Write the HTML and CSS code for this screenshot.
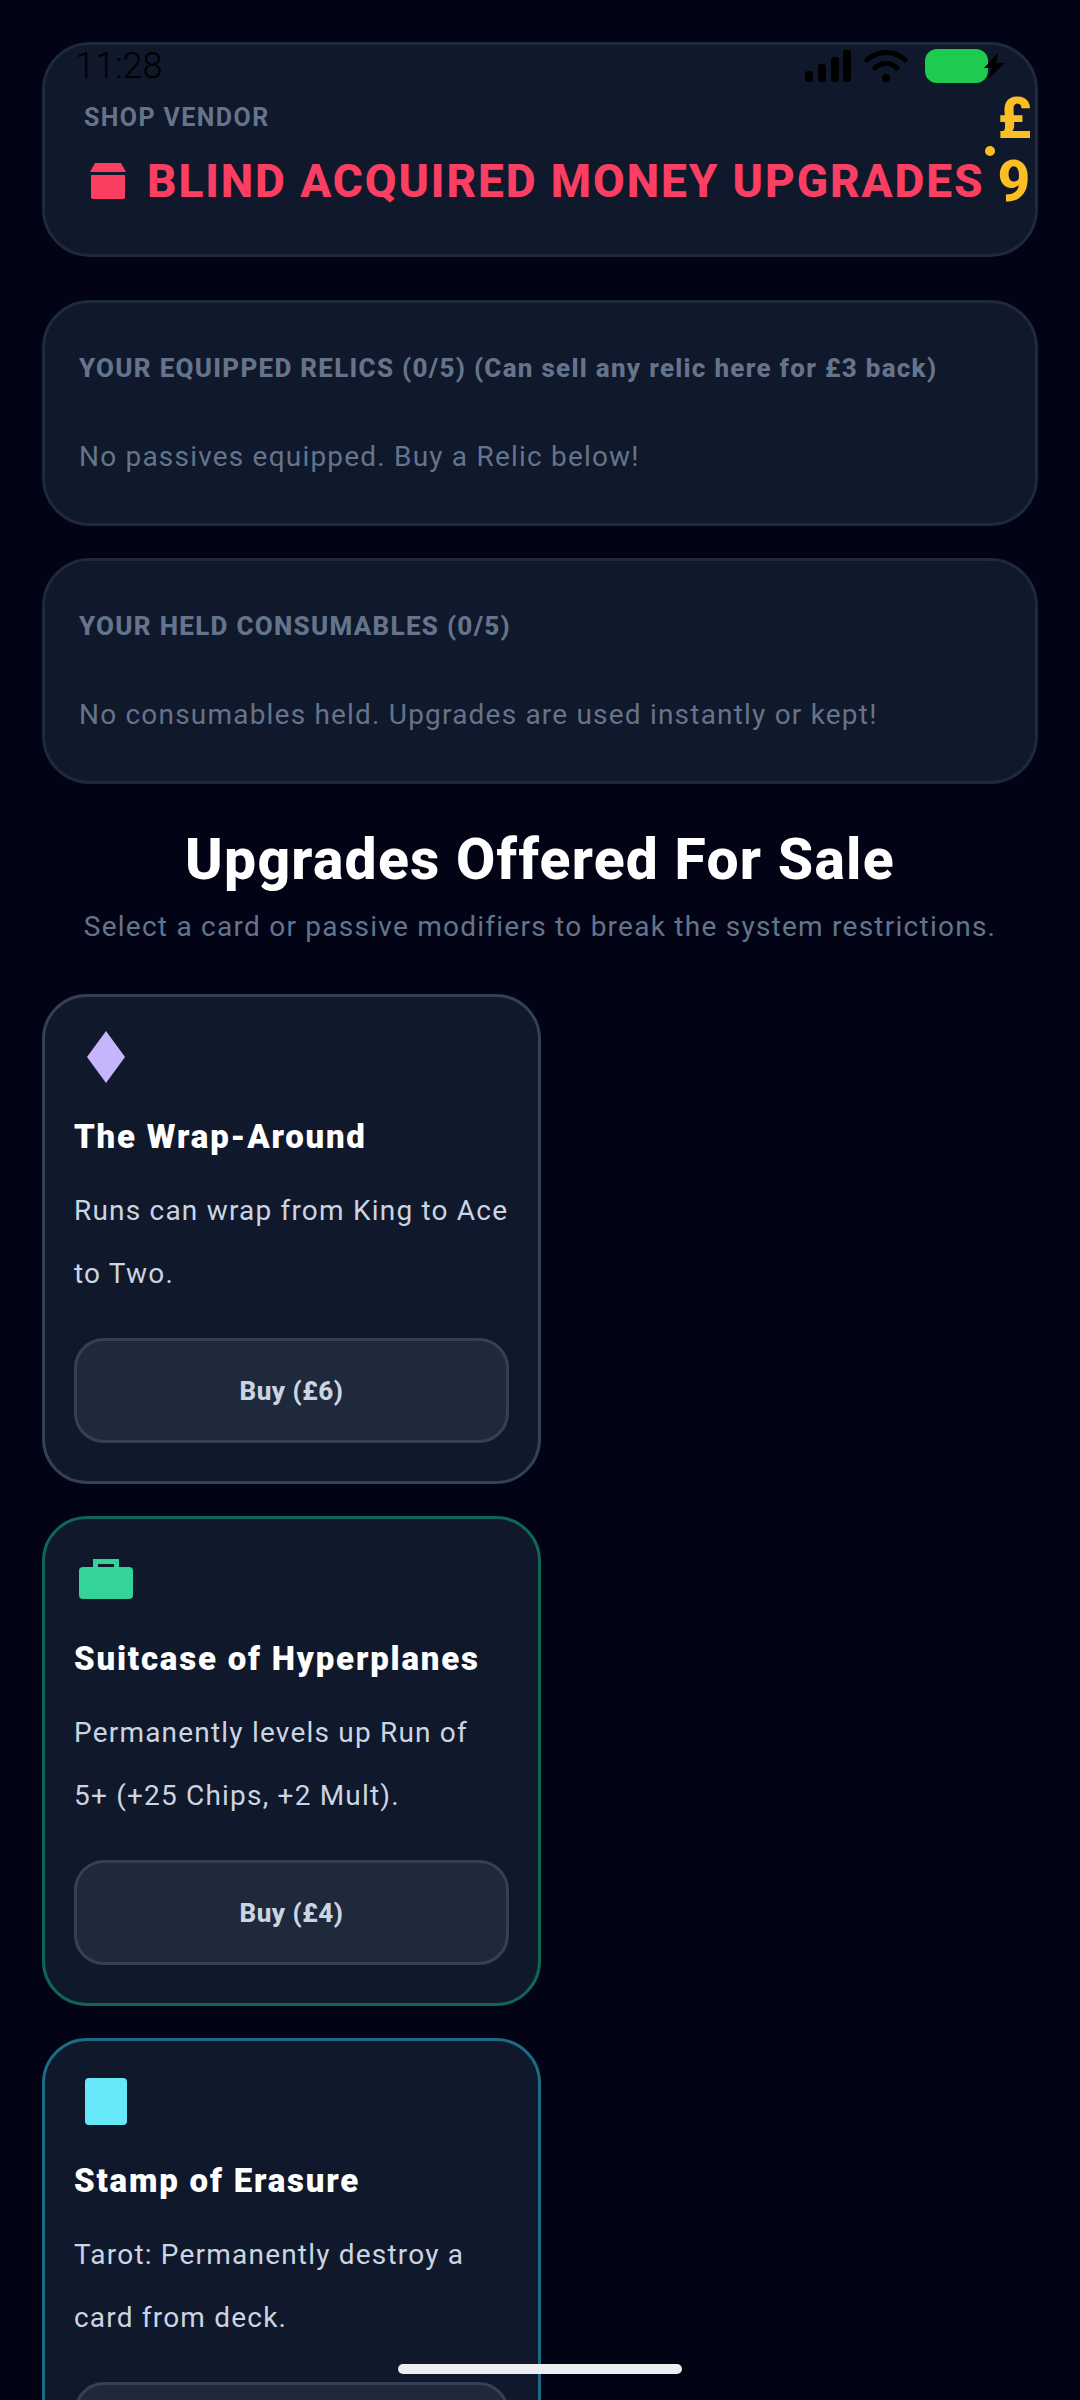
FILE: index.html
```html
<!DOCTYPE html>
<html lang="en">
<head>
  <meta charset="UTF-8">
  <meta name="viewport" content="width=device-width, initial-scale=1.0">
  <title>Shop Vendor</title>
  <link rel="stylesheet" href="styles.css">
</head>
<body>
  <div class="status-bar">
    <span class="status-time">11:28</span>
    <div class="status-icons">
      <svg class="icon-signal" width="46" height="34" viewBox="0 0 46 34" fill="#000">
        <rect x="0" y="22" width="8" height="11" rx="3"/>
        <rect x="13" y="15" width="8" height="18" rx="3"/>
        <rect x="26" y="8" width="8" height="25" rx="3"/>
        <rect x="38" y="1" width="8" height="32" rx="3"/>
      </svg>
      <svg class="icon-wifi" width="44" height="34" viewBox="0 0 44 34" fill="none" stroke="#000" stroke-width="5" stroke-linecap="round">
        <path d="M3 11C14 1 30 1 41 11"/>
        <path d="M11 19C17 13 27 13 33 19"/>
        <circle cx="22" cy="29" r="4" fill="#000" stroke="none"/>
      </svg>
      <div class="battery"></div>
      <svg class="icon-bolt" width="24" height="26" viewBox="0 0 24 26" fill="#000">
        <path d="M16 0L2 15h8l-4 11L23 10h-9z"/>
      </svg>
    </div>
  </div>

  <header class="panel vendor">
    <div class="vendor-main">
      <div class="vendor-label">SHOP VENDOR</div>
      <div class="vendor-row">
        <svg class="vendor-icon" width="36" height="36" viewBox="0 0 36 36" fill="#fb3f62">
          <path d="M5 0h26l5 9H0z"/>
          <path d="M1 12h34v22a2 2 0 0 1-2 2H3a2 2 0 0 1-2-2z"/>
        </svg>
        <h1>BLIND ACQUIRED MONEY UPGRADES</h1>
      </div>
    </div>
    <div class="money"><span>£</span><span>9</span></div>
    <span class="money-dot"></span>
  </header>

  <section class="panel inventory">
    <h2>YOUR EQUIPPED RELICS (0/5) (Can sell any relic here for £3 back)</h2>
    <p>No passives equipped. Buy a Relic below!</p>
  </section>

  <section class="panel inventory">
    <h2>YOUR HELD CONSUMABLES (0/5)</h2>
    <p>No consumables held. Upgrades are used instantly or kept!</p>
  </section>

  <div class="shop-head">
    <h3>Upgrades Offered For Sale</h3>
    <p>Select a card or passive modifiers to break the system restrictions.</p>
  </div>

  <div class="offers">
    <article class="offer">
      <div class="offer-icon">
        <svg width="38" height="52" viewBox="0 0 38 52" fill="#c4b5fd"><path d="M19 0l19 26-19 26L0 26z"/></svg>
      </div>
      <h4>The Wrap-Around</h4>
      <p>Runs can wrap from King to Ace<br>to Two.</p>
      <button>Buy (£6)</button>
    </article>

    <article class="offer offer-green">
      <div class="offer-icon">
        <svg width="54" height="40" viewBox="0 0 54 40" fill="#34d399">
          <path d="M14 0h26v8h-5V5H19v3h-5z"/>
          <rect x="0" y="8" width="54" height="32" rx="4"/>
        </svg>
      </div>
      <h4>Suitcase of Hyperplanes</h4>
      <p>Permanently levels up Run of<br>5+ (+25 Chips, +2 Mult).</p>
      <button>Buy (£4)</button>
    </article>

    <article class="offer offer-cyan">
      <div class="offer-icon">
        <svg width="42" height="47" viewBox="0 0 42 47" fill="#67e8f9"><rect width="42" height="47" rx="4"/></svg>
      </div>
      <h4>Stamp of Erasure</h4>
      <p>Tarot: Permanently destroy a<br>card from deck.</p>
      <button></button>
    </article>
  </div>

  <div class="home-bar"></div>
</body>
</html>
```

FILE: styles.css
```css
html, body {
  height: 2400px;
  overflow: hidden;
}
body {
  font-family: Roboto, 'Liberation Sans', sans-serif;
  background-color: #020416;
  color: #cbd5e1;
  margin: 0;
  padding: 42px 42px 0;
  box-sizing: border-box;
  position: relative;
}
h1, h2, h3, h4, p {
  margin: 0;
}

/* status bar sits over the page */
.status-bar {
  position: absolute;
  top: 46px;
  left: 75px;
  right: 74px;
  z-index: 2;
  display: flex;
  justify-content: space-between;
  align-items: flex-start;
}
.status-time {
  font-size: 36px;
  font-weight: 300;
  line-height: 40px;
  color: #000;
}
.status-icons {
  display: flex;
  align-items: center;
  margin-top: 3px;
}
.icon-wifi {
  margin-left: 13px;
}
.battery {
  width: 63px;
  height: 34px;
  margin-left: 17px;
  background: #1ccb4f;
  border-radius: 12px;
}
.icon-bolt {
  margin-left: -6px;
}

.panel {
  background: #10182b;
  border: 3px solid #1e293b;
  border-radius: 48px;
  box-sizing: border-box;
}
.vendor {
  height: 215px;
  padding-left: 39px;
  margin-bottom: 43px;
  position: relative;
  display: flex;
  align-items: center;
}
.vendor-main {
  margin-top: 11px;
}
.vendor-label {
  font-size: 25px;
  font-weight: 700;
  line-height: 30px;
  letter-spacing: 1.4px;
  color: #64748b;
}
.vendor-row {
  display: flex;
  align-items: center;
  margin-top: 21px;
}
.vendor-icon {
  margin: 0 0 0 6px;
}
.vendor-row h1 {
  font-size: 46px;
  font-weight: 800;
  line-height: 54px;
  letter-spacing: 1.9px;
  color: #fb3f62;
  margin-left: 21px;
  white-space: nowrap;
}
.money {
  display: flex;
  flex-direction: column;
  margin-left: 13px;
  font-size: 57px;
  font-weight: 800;
  line-height: 63px;
  color: #fbbf24;
}
.money-dot {
  position: absolute;
  top: 101px;
  left: 940px;
  width: 10px;
  height: 10px;
  border-radius: 50%;
  background: #fbbf24;
}

.inventory {
  height: 226px;
  padding: 49px 34px 0;
  margin-bottom: 32px;
}
.inventory h2 {
  font-size: 26px;
  font-weight: 800;
  line-height: 32px;
  letter-spacing: 1.28px;
  color: #64748b;
}
.inventory p {
  margin-top: 53px;
  font-size: 28px;
  line-height: 40px;
  letter-spacing: 1.2px;
  color: #64748b;
}

.shop-head {
  text-align: center;
  margin-bottom: 47px;
}
.shop-head h3 {
  font-size: 57px;
  font-weight: 800;
  line-height: 70px;
  letter-spacing: 1.25px;
  color: #fff;
  margin-top: 41px;
}
.shop-head p {
  font-size: 28px;
  line-height: 40px;
  letter-spacing: 1.25px;
  color: #64748b;
  margin-top: 12px;
}

.offers {
  display: flex;
  flex-direction: column;
  gap: 32px;
  width: 499px;
}
.offer {
  background: #10182b;
  border: 3px solid #334155;
  border-radius: 45px;
  padding: 29px 29px 38px;
}
.offer-green {
  border-color: #0f6654;
}
.offer-cyan {
  border-color: #1d6a84;
}
.offer-icon {
  height: 62px;
  width: 63px;
  display: flex;
  align-items: center;
  justify-content: center;
}
.offer h4 {
  font-size: 33px;
  font-weight: 900;
  line-height: 40px;
  letter-spacing: 1.8px;
  color: #fff;
  margin-top: 29px;
}
.offer p {
  font-size: 28px;
  line-height: 63px;
  letter-spacing: 1.2px;
  margin-top: 22px;
  white-space: nowrap;
}
.offer button {
  display: block;
  width: 100%;
  height: 105px;
  margin-top: 33px;
  background: #1e293b;
  border: 3px solid #334155;
  border-radius: 30px;
  font-family: inherit;
  font-size: 26px;
  font-weight: 800;
  letter-spacing: 0.5px;
  color: #cbd5e1;
}

.home-bar {
  position: absolute;
  top: 2364px;
  left: 398px;
  width: 284px;
  height: 10px;
  border-radius: 5px;
  background: #eceef1;
}
```
